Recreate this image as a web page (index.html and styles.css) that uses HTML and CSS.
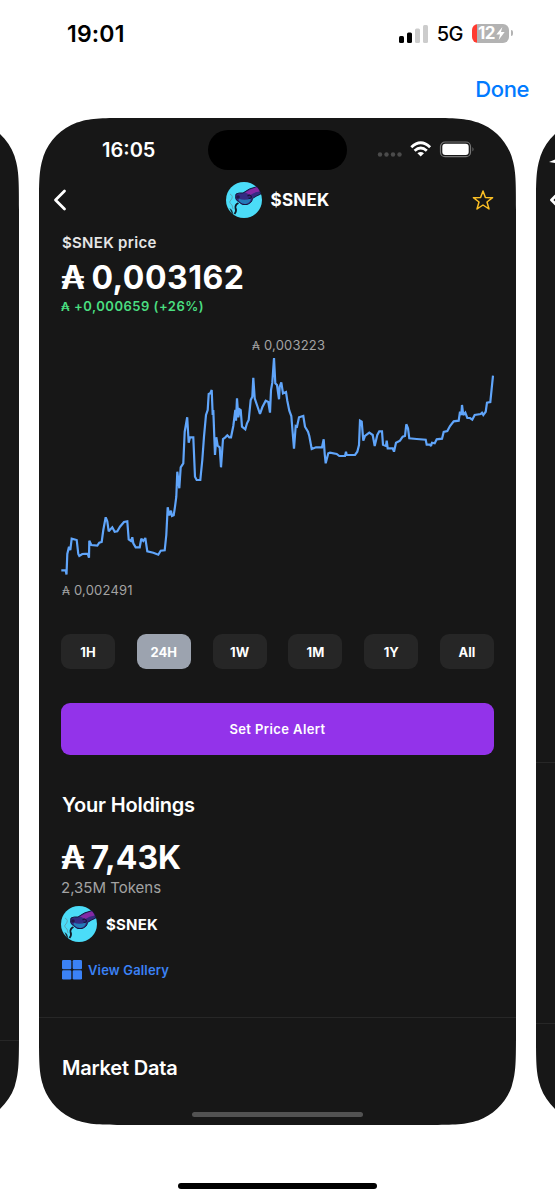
FILE: index.html
```html
<!DOCTYPE html>
<html lang="en">
<head>
    <meta charset="UTF-8">
    <meta name="viewport" content="width=device-width, initial-scale=1.0">
    <title>$SNEK price</title>
    <link rel="stylesheet" href="styles.css">
</head>
<body>
    <svg width="0" height="0" class="defs">
        <symbol id="snek" viewBox="0 0 36 36">
            <circle cx="18" cy="18" r="18" fill="#4bdcf8"/>
            <path d="M10 12 Q13 10.500 17 11 Q23 6 31 4.700 Q34 8 34.800 12 Q30 14 26.500 16.500 Q26 21 21 22.500 Q16 24 12.500 19.500 Q8.500 18 10 12Z" fill="#342b82" stroke="#17163f" stroke-width="1"/>
            <path d="M19 10.500 Q25 6.500 31 5.200 Q33 7.500 33.800 9.500 Q28 10 24.500 13Z" fill="#8429a5"/>
            <path d="M12.500 16.500 Q18 19 25 16.500 Q24.500 20.500 20.500 21.700 Q16 22.700 13 19Z" fill="#237bb8"/>
            <circle cx="12" cy="15" r="1.800" fill="#221747"/>
            <path d="M21.500 14 q3 -2 4 1 q-1 2 -3 1" fill="none" stroke="#171339" stroke-width="1.200"/>
            <path d="M12.500 21 Q9 22.500 9.500 26 Q11 29 8.500 32" fill="none" stroke="#101827" stroke-width="1.800"/>
            <path d="M4 12 Q8 14 5 18 Q2 20 6 23 L7 27" fill="none" stroke="#5b9dac" stroke-width="0.900"/>
            <path d="M3.500 26 L6 28 L7.500 32.500 L5.500 31Z" fill="#17303d"/>
        </symbol>
    </svg>

    <div class="status-bar">
        <span class="clock">19:01</span>
        <div class="status-icons">
            <svg class="signal" width="29" height="18" viewBox="0 0 29 18">
                <rect x="0" y="11" width="5" height="7" rx="1.500" fill="#000"/>
                <rect x="8" y="7.500" width="5" height="10.500" rx="1.500" fill="#000"/>
                <rect x="16" y="3.500" width="5" height="14.500" rx="1.500" fill="#ccc"/>
                <rect x="24" y="0" width="5" height="18" rx="1.500" fill="#ccc"/>
            </svg>
            <span class="network">5G</span>
            <div class="battery">
                <span>12</span>
                <svg width="9" height="13" viewBox="0 0 9 14"><path d="M6.500 0 L0 8 H4 L2.500 14 L9 5.500 H5Z" fill="#fff"/></svg>
            </div>
            <span class="battery-tip"></span>
        </div>
    </div>

    <div class="done-bar">
        <a class="done">Done</a>
    </div>

    <div class="carousel">
        <div class="card card-prev">
            <div class="divider"></div>
        </div>

        <div class="card">
            <div class="phone-status">
                <span class="phone-clock">16:05</span>
                <span class="island"></span>
                <svg class="phone-icons" width="98" height="18" viewBox="0 0 98 18">
                    <g fill="#4b4b4b">
                        <circle cx="3" cy="13.500" r="2.200"/>
                        <circle cx="9.500" cy="13.500" r="2.200"/>
                        <circle cx="16" cy="13.500" r="2.200"/>
                        <circle cx="22.500" cy="13.500" r="2.200"/>
                    </g>
                    <g fill="none" stroke="#fff" stroke-width="2.800">
                        <path d="M34.300 6.200 Q43.700 -2.600 53.100 6.200"/>
                        <path d="M37.600 9.800 Q43.700 4.200 49.800 9.800"/>
                    </g>
                    <path d="M40.400 12.300 Q43.700 9.600 47 12.300 L43.700 15.600Z" fill="#fff"/>
                    <rect x="63.500" y="1" width="30" height="14.700" rx="4.500" fill="none" stroke="#777" stroke-width="1.200"/>
                    <rect x="65.300" y="2.800" width="26.400" height="11.100" rx="3" fill="#fff"/>
                    <path d="M95.500 6 Q97.500 8.300 95.500 10.600Z" fill="#777"/>
                </svg>
            </div>

            <div class="token-header">
                <svg class="back" width="14" height="22" viewBox="0 0 14 22"><path d="M11.500 2 L2.500 11 L11.500 20" fill="none" stroke="#fff" stroke-width="2.800" stroke-linecap="round" stroke-linejoin="round"/></svg>
                <div class="token-title">
                    <svg width="36" height="36"><use href="#snek"/></svg>
                    <span>$SNEK</span>
                </div>
                <svg class="star" width="22" height="21" viewBox="0 0 22 21"><path d="M11 1 L13.400 7.500 L20.600 7.700 L15 12 L17 19 L11 15 L5 19 L7 12 L1.400 7.700 L8.600 7.500Z" fill="none" stroke="#fbbf24" stroke-width="1.500" stroke-linejoin="round"/></svg>
            </div>

            <div class="content">
                <div class="price-label">$SNEK price</div>
                <div class="price"><span class="ada">₳</span> 0,003162</div>
                <div class="change"><span class="ada">₳</span> +0,000659 (+26%)</div>

                <div class="chart-high"><span class="ada">₳</span> 0,003223</div>
                <svg class="chart" width="433" height="222" viewBox="61 355 433 222">
                    <polyline points="61.3,570.3 65.7,570.3 66.5,574.5 67.3,554 69,546.7 70.3,550 71.7,538.7 76.7,540 78.3,554 79.3,556 82.3,554 87.7,553.7 89,557.7 89.3,540.7 91.3,545 97.3,545.7 99.3,542.7 101.7,542 103.3,530 105.7,517.3 107.3,521.3 108.7,531.3 112.3,527.3 114.7,531.7 117.3,531.3 120,526.7 124,522 127.3,521.3 128.7,539.3 131,541 132.3,537.3 133.3,543.3 135.7,547.3 139.7,547.3 141.3,538.7 143.3,541 145.3,538 147.3,551.3 153.3,552.7 158.3,554.7 160.7,550.7 164.7,550.3 166.3,535 167.7,507.3 169.3,515.3 171,510.7 172,516 173.7,515.3 175,506.7 176.3,496.7 177.3,471.7 179.3,488.3 180.7,467.3 183.3,463.3 184.7,431.7 187.2,417.3 188.7,442.7 190,437.3 193.3,437.3 195,476.7 196.7,480 200.3,480 202.3,460 204,436.7 206,415 207.7,410 208.7,394 210.3,393.3 211.7,390 212.7,415 213.3,410 215,455 216.3,437.3 217.7,445.7 219.7,447.3 221,467.3 223,439 225.3,437.3 227.3,435.3 229.3,437.3 231,437.3 233.3,426 235.3,410 236,420.7 237,398.3 238.3,417.3 239.7,409.3 240.7,410 242,426.7 245.3,429.3 247,423.3 248.7,420 250.7,400 252.3,396.7 253.3,377.7 254.7,398.3 257.3,406 260,414 262.3,407.3 265.7,400.7 268.3,402 270,412.7 271,390 272.3,382.7 274,358 275.3,383.3 277,385 279,399.3 279.7,386.7 281.3,382.3 283,393.3 286,392 287.3,400.7 289.3,410.7 291.3,416 294,448.7 295.7,426 297,426.7 299,417.3 303.3,416 305,426.7 308,431.7 309.3,436 311.7,449 316,447.3 322,447.3 323.7,439.3 324.7,454 325.7,463.3 328.3,453.3 330,452.7 336.7,454 339.3,456 345,456 346,451.7 346.7,455 355,455 357.3,451.7 359,445 360,420.7 361.7,421.7 363.3,440.7 365,436 369.3,432.7 372.7,435 374.7,446 377.3,435 379.3,431.3 382,431.3 383,444.7 386,446 386.7,440.7 387.7,448.3 392.7,448.3 394,451.7 396,442.7 400,440.7 402.7,436.7 405,436 406.3,424.3 408,428.3 409.3,438.3 416.7,439 425.7,439.7 426.7,444.7 430,444.7 431,446 432,442.7 434.7,443.3 436.7,439.3 442,438.7 443.7,432 447.3,431 450,426 453.7,421.3 458.7,420.7 460,411.7 461.3,415 462,405 463.3,415 465.3,412.7 467.3,418 470,418 472.3,419.7 474.7,415 480.7,414 482,412.7 483.3,415 485.7,411.7 487,402.7 490.3,402 491.7,388.3 493,375.7" fill="none" stroke="#60a5fa" stroke-width="2.200" stroke-linejoin="miter" stroke-miterlimit="2"/>
                </svg>
                <div class="chart-low"><span class="ada">₳</span> 0,002491</div>

                <div class="ranges">
                    <button>1H</button>
                    <button class="active">24H</button>
                    <button>1W</button>
                    <button>1M</button>
                    <button>1Y</button>
                    <button>All</button>
                </div>

                <button class="alert-button">Set Price Alert</button>

                <h2 class="holdings-title">Your Holdings</h2>
                <div class="holdings-value"><span class="ada">₳</span> 7,43K</div>
                <div class="holdings-tokens">2,35M Tokens</div>
                <div class="holdings-token">
                    <svg width="36" height="36"><use href="#snek"/></svg>
                    <span>$SNEK</span>
                </div>
                <div class="gallery">
                    <svg width="20" height="20" viewBox="0 0 20 20" fill="#3b82f6">
                        <rect x="0" y="0" width="9.300" height="9.300" rx="1.300"/>
                        <rect x="10.700" y="0" width="9.300" height="9.300" rx="1.300"/>
                        <rect x="0" y="10.300" width="9.300" height="9.300" rx="1.300"/>
                        <rect x="10.700" y="10.300" width="9.300" height="9.300" rx="1.300"/>
                    </svg>
                    <span>View Gallery</span>
                </div>
            </div>

            <div class="divider"></div>
            <h2 class="market-title">Market Data</h2>
            <div class="card-indicator"></div>
        </div>

        <div class="card card-next">
            <svg class="peek" width="20" height="12" viewBox="0 0 20 12"><path d="M0 5 L12 0 L7 12 L6 6Z" fill="#fff"/></svg>
            <svg class="back" width="14" height="22" viewBox="0 0 14 22"><path d="M11.500 2 L2.500 11 L11.500 20" fill="none" stroke="#fff" stroke-width="2.800" stroke-linecap="round" stroke-linejoin="round"/></svg>
            <div class="divider"></div>
            <div class="divider"></div>
        </div>
    </div>

    <div class="home-indicator"></div>
</body>
</html>
```
FILE: styles.css
```css
* {
    box-sizing: border-box;
}
body {
    margin: 0;
    width: 555px;
    height: 1200px;
    overflow: hidden;
    background: #fff;
    font-family: Inter, sans-serif;
    color: #fff;
    display: flex;
    flex-direction: column;
}
.defs {
    position: absolute;
}
svg {
    display: block;
    flex-shrink: 0;
}
h2 {
    margin: 0;
    font-size: 20px;
    line-height: 28px;
    font-weight: 600;
    letter-spacing: -0.2px;
}
button {
    font-family: inherit;
    color: #fff;
    border: none;
    padding: 0;
}

/* outer status bar */
.status-bar {
    height: 68px;
    padding: 0 42px 0 67px;
    display: flex;
    align-items: center;
    justify-content: space-between;
    color: #000;
}
.clock {
    font-size: 23px;
    font-weight: 600;
    letter-spacing: 0.2px;
}
.status-icons {
    display: flex;
    align-items: center;
}
.network {
    margin: 0 9px 0 9px;
    font-size: 20px;
    font-weight: 500;
    letter-spacing: -0.5px;
}
.battery {
    width: 37px;
    height: 19px;
    margin-bottom: 2px;
    border-radius: 6px;
    background: linear-gradient(to right, #ff3b30 5px, #b3b3b3 5px);
    color: #fff;
    display: flex;
    align-items: center;
    justify-content: flex-end;
    gap: 1px;
    padding-right: 4px;
    font-size: 17px;
    font-weight: 700;
    letter-spacing: -0.5px;
}
.battery-tip {
    width: 2px;
    height: 6px;
    margin: 0 0 2px 2px;
    background: #b3b3b3;
    border-radius: 0 2px 2px 0;
}
.done-bar {
    height: 50px;
    padding: 6px 26px 0;
    text-align: right;
}
.done {
    color: #007aff;
    font-size: 22px;
    line-height: 30px;
    font-weight: 500;
    letter-spacing: -0.4px;
}

/* screenshots */
.carousel {
    display: flex;
    justify-content: center;
    gap: 20px;
    height: 1007px;
    overflow: hidden;
}
.card {
    flex: 0 0 477px;
    height: 1007px;
    background: #171717;
    clip-path: path("M91.7 0 L385.3 0 C411.7 0 424.9 0 436.8 3.9 L439.1 4.5 C454.6 10.1 466.9 22.4 472.5 37.9 L473.1 40.2 C477 52.1 477 65.3 477 91.7 L477 915.3 C477 941.7 477 954.9 473.1 966.8 L472.5 969.1 C466.9 984.6 454.6 996.9 439.1 1002.5 L436.8 1003.1 C424.9 1007 411.7 1007 385.3 1007 L91.7 1007 C65.3 1007 52.1 1007 40.2 1003.1 L37.9 1002.5 C22.4 996.9 10.1 984.6 4.5 969.1 L3.9 966.8 C0 954.9 0 941.7 0 915.3 L0 91.7 C0 65.3 0 52.1 3.9 40.2 L4.5 37.9 C10.1 22.4 22.4 10.1 37.9 4.5 L40.2 3.9 C52.1 0 65.3 0 91.7 0Z");
}
.divider {
    height: 1px;
    background: #272727;
}
.card-prev {
    padding-top: 922px;
}
.card-next {
    padding-top: 39px;
}
.card-next .peek {
    margin-left: 13px;
}
.card-next .back {
    margin: 20px 0 0 13px;
}
.card-next .divider {
    margin-top: 551px;
}
.card-next .divider + .divider {
    margin-top: 260px;
}

.phone-status {
    height: 64px;
    display: grid;
    grid-template-columns: 169px 139px 1fr;
    align-items: center;
}
.phone-clock {
    padding-left: 63px;
    font-size: 20px;
    font-weight: 600;
}
.island {
    height: 40px;
    border-radius: 20px;
    background: #000;
}
.phone-icons {
    margin-left: 30px;
}
.token-header {
    height: 36px;
    padding: 0 22px 0 14px;
    display: grid;
    grid-template-columns: 1fr auto 1fr;
    align-items: center;
}
.token-title {
    display: flex;
    align-items: center;
    gap: 9px;
    margin-left: 8px;
    font-size: 17px;
    font-weight: 700;
    letter-spacing: 0.2px;
}
.star {
    justify-self: end;
}

.content {
    height: 799px;
    padding: 15px 22px 0;
    display: flex;
    flex-direction: column;
}
.ada {
    line-height: 1;
}
.price-label {
    margin-left: 1px;
    font-size: 15px;
    line-height: 20px;
    font-weight: 600;
    letter-spacing: 0.3px;
    color: #e5e5e5;
}
.price {
    margin-top: 5px;
    font-size: 32px;
    line-height: 40px;
    font-weight: 700;
    letter-spacing: 0.5px;
}
.price .ada,
.holdings-value .ada {
    margin-right: -2px;
}
.change {
    font-size: 13px;
    line-height: 16px;
    font-weight: 600;
    letter-spacing: 0.5px;
    color: #4ade80;
}
.change .ada {
    font-size: 12px;
}
.chart-high,
.chart-low {
    font-size: 13px;
    line-height: 16px;
    letter-spacing: 0.2px;
    color: #a3a3a3;
}
.chart-high .ada,
.chart-low .ada {
    font-size: 11.5px;
}
.chart-high {
    margin: 23px 0 0 191px;
}
.chart {
    margin-top: 2px;
}
.chart-low {
    margin: 5px 0 0 1px;
}
.ranges {
    margin-top: 36px;
    display: flex;
    justify-content: space-between;
}
.ranges button {
    width: 54px;
    height: 35px;
    border-radius: 9px;
    background: #262626;
    font-size: 13px;
    font-weight: 700;
}
.ranges .active {
    background: #9ca3af;
}
.alert-button {
    margin-top: 34px;
    height: 52px;
    flex-shrink: 0;
    border-radius: 9px;
    background: #9333ea;
    font-size: 13px;
    font-weight: 600;
    letter-spacing: 0.4px;
}
.holdings-title {
    margin: 36px 0 0 1px;
}
.holdings-value {
    margin-top: 19px;
    font-size: 32px;
    line-height: 40px;
    font-weight: 700;
}
.holdings-tokens {
    font-size: 15px;
    line-height: 20px;
    color: #a3a3a3;
}
.holdings-token {
    margin-top: 8px;
    display: flex;
    align-items: center;
    gap: 9px;
    font-size: 15px;
    font-weight: 700;
    letter-spacing: 0.2px;
}
.gallery {
    margin: 18px 0 0 1px;
    display: flex;
    align-items: center;
    gap: 6px;
    font-size: 13px;
    font-weight: 600;
    letter-spacing: 0.15px;
    color: #3b82f6;
}
.market-title {
    margin: 36px 0 0 23px;
}
.card-indicator {
    width: 171px;
    height: 5px;
    margin: 30px auto 0;
    border-radius: 3px;
    background: #525252;
}

.home-indicator {
    width: 199px;
    height: 6px;
    margin: 58px auto 0;
    border-radius: 3px;
    background: #000;
}
```
